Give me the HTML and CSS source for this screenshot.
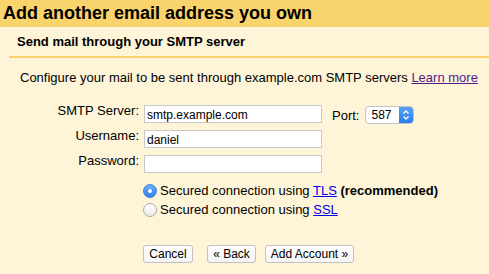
FILE: index.html
```html
<!DOCTYPE html>
<html>
<head>
<meta charset="utf-8">
<link rel="stylesheet" href="styles.css">
</head>
<body>
<div class="header"><h1 class="title">Add another email address you own</h1></div>
<div class="panel">
  <div class="subhead">Send mail through your SMTP server</div>
  <p class="intro">Configure your mail to be sent through example.com SMTP servers <a class="visited" href="#">Learn more</a></p>
  <div class="form">
    <label class="lbl">SMTP Server:</label>
    <div class="row">
      <input class="field" type="text" value="smtp.example.com">
      <span class="port-lbl">Port:</span>
      <div class="select"><span class="sel-val">587</span><span class="stepper"><svg width="8" height="12" viewBox="0 0 8 12"><path d="M1.5 4.5 L4 2 L6.5 4.5 M1.5 7.5 L4 10 L6.5 7.5" fill="none" stroke="#fff" stroke-width="1.4"/></svg></span></div>
    </div>
    <label class="lbl">Username:</label>
    <div class="row"><input class="field" type="text" value="daniel"></div>
    <label class="lbl">Password:</label>
    <div class="row"><input class="field" type="password" value=""></div>
  </div>
  <div class="radios">
    <div class="radio-row"><span class="radio on"></span><span>Secured connection using <a href="#">TLS</a> <b>(recommended)</b></span></div>
    <div class="radio-row"><span class="radio"></span><span>Secured connection using <a href="#">SSL</a></span></div>
  </div>
  <div class="buttons">
    <button class="btn btn-cancel">Cancel</button>
    <button class="btn btn-back">« Back</button>
    <button class="btn btn-add">Add Account »</button>
  </div>
</div>
</body>
</html>
```
FILE: styles.css
```css
html, body {
  margin: 0;
  padding: 0;
  background: #fef5d8;
  font-family: "Liberation Sans", Arial, sans-serif;
  color: #000;
}
.header {
  background: #f9d36b;
  height: 27px;
  padding-left: 3px;
}
.title {
  margin: 0;
  font-size: 18px;
  font-weight: bold;
  line-height: 27px;
}
.panel {
  padding: 0;
}
.subhead {
  margin-left: 9px;
  padding-left: 8px;
  font-size: 13px;
  font-weight: bold;
  height: 31px;
  line-height: 16px;
  padding-top: 0;
  box-sizing: border-box;
  display: flex;
  align-items: center;
  border-bottom: 2px solid #f9d36b;
}
.intro {
  margin: 0;
  padding: 12px 0 0 20px;
  font-size: 13px;
  line-height: 16px;
}
a {
  color: #0000ee;
  text-decoration: underline;
}
a.visited {
  color: #551a8b;
}
.form {
  display: grid;
  grid-template-columns: 131px auto;
  column-gap: 5px;
  row-gap: 7px;
  margin-top: 19px;
  padding-left: 8px;
}
.lbl {
  text-align: right;
  font-size: 13px;
  line-height: 14px;
  align-self: start;
  margin-top: -1px;
}
.row {
  display: flex;
  align-items: center;
  height: 18px;
}
.field {
  box-sizing: border-box;
  width: 178px;
  height: 18px;
  margin: 0;
  padding: 2px 2px 0 2px;
  border: 1px solid #c8c8c8;
  background: #fff;
  font-family: "Liberation Sans", Arial, sans-serif;
  font-size: 12px;
  outline: none;
}
.port-lbl {
  font-size: 13px;
  margin-left: 10px;
  margin-top: 3px;
}
.select {
  margin-left: 6px;
  margin-top: 2px;
  display: flex;
  width: 49px;
  height: 18px;
  box-sizing: border-box;
  border: 1px solid #c4c4c4;
  border-radius: 4px;
  background: #fff;
  overflow: hidden;
}
.sel-val {
  flex: 1;
  font-size: 12px;
  line-height: 17px;
  padding-left: 5px;
}
.stepper {
  width: 14px;
  background: linear-gradient(#5aa2f5, #2a7de9);
  display: flex;
  align-items: center;
  justify-content: center;
}
.radios {
  margin-top: 8px;
  padding-left: 143px;
  font-size: 13px;
}
.radio-row {
  display: flex;
  align-items: center;
  height: 19px;
}
.radio {
  box-sizing: border-box;
  width: 14px;
  height: 14px;
  border-radius: 50%;
  border: 1px solid #a9a9a9;
  background: linear-gradient(#ffffff, #ececec);
  margin-right: 3px;
  display: flex;
  align-items: center;
  justify-content: center;
}
.radio.on {
  border-color: #3a84e0;
  background: linear-gradient(#68aef7, #2f82ea);
}
.radio.on::after {
  content: "";
  width: 4px;
  height: 4px;
  border-radius: 50%;
  background: #fff;
}
.buttons {
  margin-top: 26px;
  padding-left: 143px;
  display: flex;
}
.btn {
  height: 18px;
  box-sizing: border-box;
  padding: 0;
  border: 1px solid #c2c2c2;
  border-radius: 3px;
  background: linear-gradient(#ffffff, #f4f4f4);
  font-family: "Liberation Sans", Arial, sans-serif;
  font-size: 12px;
  line-height: 16px;
  color: #000;
  text-align: center;
}
.btn-cancel { width: 50px; }
.btn-back { width: 49px; margin-left: 14px; }
.btn-add { width: 89px; margin-left: 9px; }
```
